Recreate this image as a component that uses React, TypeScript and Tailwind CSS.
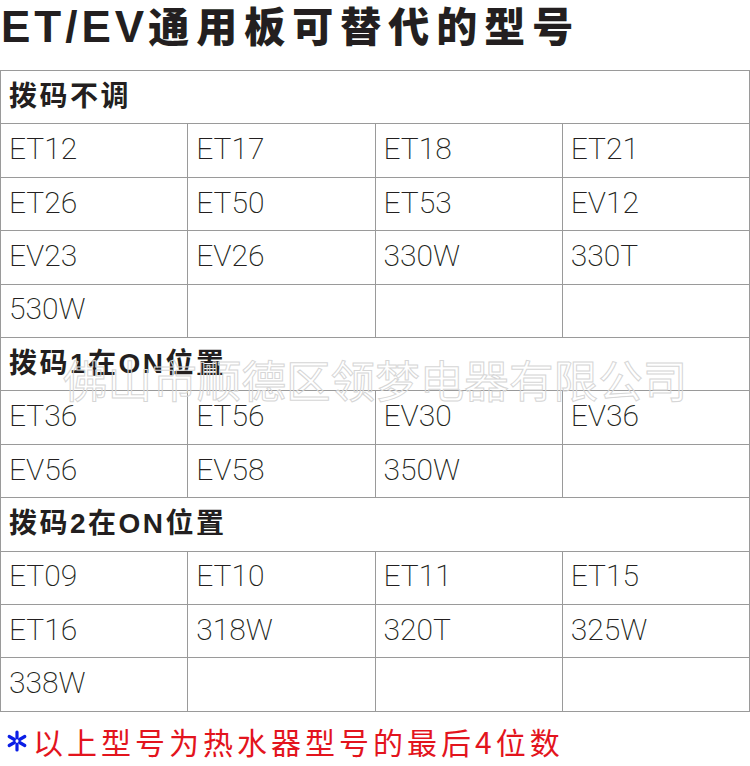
const sections = [
  {
    title: "拨码不调",
    items: ["ET12", "ET17", "ET18", "ET21", "ET26", "ET50", "ET53", "EV12", "EV23", "EV26", "330W", "330T", "530W"],
  },
  {
    title: "拨码1在ON位置",
    items: ["ET36", "ET56", "EV30", "EV36", "EV56", "EV58", "350W"],
  },
  {
    title: "拨码2在ON位置",
    items: ["ET09", "ET10", "ET11", "ET15", "ET16", "318W", "320T", "325W", "338W"],
  },
]

const pad = (items: string[]) => {
  const out = [...items]
  while (out.length % 4 !== 0) out.push("")
  return out
}

const Asterisk = () => (
  <svg width="22" height="22" viewBox="0 0 22 22" className="shrink-0">
    <g stroke="#0b1ee6" strokeWidth="3.2" strokeLinecap="round">
      <line x1="11" y1="2" x2="11" y2="8" />
      <line x1="11" y1="14" x2="11" y2="20" />
      <line x1="3.2" y1="6.5" x2="8.4" y2="9.5" />
      <line x1="13.6" y1="12.5" x2="18.8" y2="15.5" />
      <line x1="18.8" y1="6.5" x2="13.6" y2="9.5" />
      <line x1="8.4" y1="12.5" x2="3.2" y2="15.5" />
    </g>
  </svg>
)

export default function App() {
  return (
    <div className="relative w-[750px] h-[766px] bg-white overflow-hidden text-[#231f20]">
      <h1 className="h-[70px] pl-[1px] pt-[5px] font-['Liberation_Sans','Noto_Sans_CJK_SC',sans-serif] text-[41px] font-black leading-none whitespace-nowrap">
        <span className="text-[44px] tracking-[4px]">ET/EV</span>
        <span className="tracking-[7px]">通用板可替代的型号</span>
      </h1>

      <div className="grid grid-cols-4 border-l border-t border-[#9a9a9a]">
        {sections.map((s) => (
          <div key={s.title} className="contents">
            <div className="col-span-4 h-[53.42px] flex items-center pl-[8px] border-r border-b border-[#9a9a9a] font-['Liberation_Sans','Noto_Sans_CJK_SC',sans-serif] text-[28px] font-bold tracking-[2.5px]">
              {s.title}
            </div>
            {pad(s.items).map((it, i) => (
              <div
                key={s.title + i}
                className="h-[53.42px] flex items-center pl-[8px] pb-[3px] border-r border-b border-[#9a9a9a] font-['Roboto',sans-serif] font-extralight text-[30px] leading-none"
              >
                {it}
              </div>
            ))}
          </div>
        ))}
      </div>

      <p className="flex items-center gap-[5px] pl-[6px] pt-[14px] font-['Noto_Sans_CJK_SC',sans-serif] text-[30px] leading-none tracking-[4px] text-[#e3141d]">
        <Asterisk />
        <span>以上型号为热水器型号的最后4位数</span>
      </p>

      <div className="pointer-events-none absolute left-[63px] top-[357px] font-['Noto_Sans_CJK_SC',sans-serif] text-[44.6px] leading-none text-transparent [-webkit-text-stroke:1px_#d6d6d6] whitespace-nowrap">
        佛山市顺德区领梦电器有限公司
      </div>
    </div>
  )
}
